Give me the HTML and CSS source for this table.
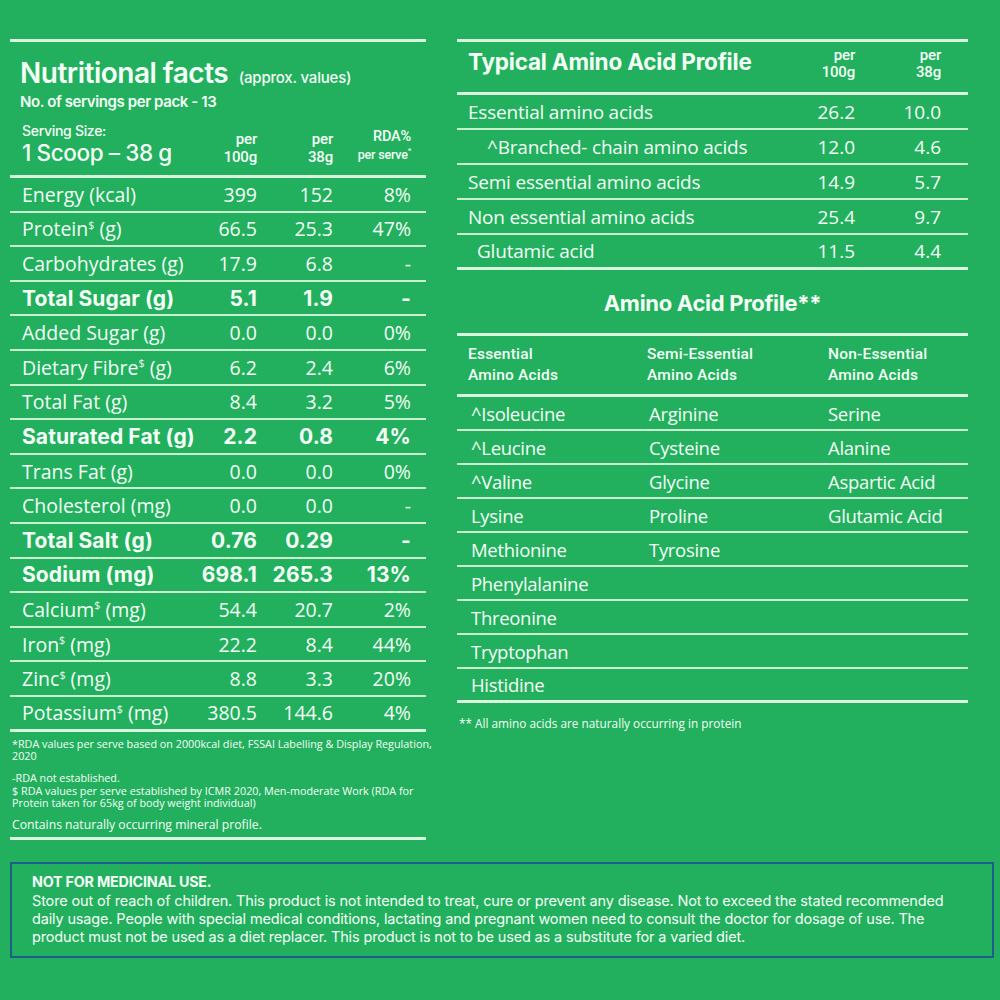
FILE: index.html
```html
<!DOCTYPE html>
<html>
<head>
<meta charset="utf-8">
<link rel="stylesheet" href="styles.css">
</head>
<body>
<div class="page">
  <div class="cols">
    <section class="left">
      <div class="nf-head">
        <div class="nf-title">Nutritional facts <span class="approx">(approx. values)</span></div>
        <div class="nf-serv">No. of servings per pack - 13</div>
      </div>
      <div class="nf-row nf-hdr">
        <div class="lab">
          <div class="ss">Serving Size:</div>
          <div class="scoop">1 Scoop – 38 g</div>
        </div>
        <div class="v c1 cond">per<br>100g</div>
        <div class="v c2 cond">per<br>38g</div>
        <div class="v c3 cond rda">RDA%<br><span class="ps">per serve<sup>*</sup></span></div>
      </div>
      <div class="nf-body">
        <div class="nf-row"><div class="lab">Energy (kcal)</div><div class="v c1">399</div><div class="v c2">152</div><div class="v c3">8%</div></div>
        <div class="nf-row"><div class="lab">Protein<sup>$</sup> (g)</div><div class="v c1">66.5</div><div class="v c2">25.3</div><div class="v c3">47%</div></div>
        <div class="nf-row"><div class="lab">Carbohydrates (g)</div><div class="v c1">17.9</div><div class="v c2">6.8</div><div class="v c3">-</div></div>
        <div class="nf-row b"><div class="lab">Total Sugar (g)</div><div class="v c1">5.1</div><div class="v c2">1.9</div><div class="v c3">-</div></div>
        <div class="nf-row"><div class="lab">Added Sugar (g)</div><div class="v c1">0.0</div><div class="v c2">0.0</div><div class="v c3">0%</div></div>
        <div class="nf-row"><div class="lab">Dietary Fibre<sup>$</sup> (g)</div><div class="v c1">6.2</div><div class="v c2">2.4</div><div class="v c3">6%</div></div>
        <div class="nf-row"><div class="lab">Total Fat (g)</div><div class="v c1">8.4</div><div class="v c2">3.2</div><div class="v c3">5%</div></div>
        <div class="nf-row b"><div class="lab">Saturated Fat (g)</div><div class="v c1">2.2</div><div class="v c2">0.8</div><div class="v c3">4%</div></div>
        <div class="nf-row"><div class="lab">Trans Fat (g)</div><div class="v c1">0.0</div><div class="v c2">0.0</div><div class="v c3">0%</div></div>
        <div class="nf-row"><div class="lab">Cholesterol (mg)</div><div class="v c1">0.0</div><div class="v c2">0.0</div><div class="v c3">-</div></div>
        <div class="nf-row b"><div class="lab">Total Salt (g)</div><div class="v c1">0.76</div><div class="v c2">0.29</div><div class="v c3">-</div></div>
        <div class="nf-row b"><div class="lab">Sodium (mg)</div><div class="v c1">698.1</div><div class="v c2">265.3</div><div class="v c3">13%</div></div>
        <div class="nf-row"><div class="lab">Calcium<sup>$</sup> (mg)</div><div class="v c1">54.4</div><div class="v c2">20.7</div><div class="v c3">2%</div></div>
        <div class="nf-row"><div class="lab">Iron<sup>$</sup> (mg)</div><div class="v c1">22.2</div><div class="v c2">8.4</div><div class="v c3">44%</div></div>
        <div class="nf-row"><div class="lab">Zinc<sup>$</sup> (mg)</div><div class="v c1">8.8</div><div class="v c2">3.3</div><div class="v c3">20%</div></div>
        <div class="nf-row last"><div class="lab">Potassium<sup>$</sup> (mg)</div><div class="v c1">380.5</div><div class="v c2">144.6</div><div class="v c3">4%</div></div>
      </div>
      <div class="notes">
        <p class="n1">*RDA values per serve based on 2000kcal diet, FSSAI Labelling &amp; Display Regulation, 2020</p>
        <p class="n2">-RDA not established.</p>
        <p class="n3">$ RDA values per serve established by ICMR 2020, Men-moderate Work (RDA for Protein taken for 65kg of body weight individual)</p>
        <p class="n4">Contains naturally occurring mineral profile.</p>
      </div>
    </section>

    <section class="right">
      <div class="aa">
        <div class="aa-row aa-hdr">
          <div class="lab aa-title">Typical Amino Acid Profile</div>
          <div class="v a1 cond">per<br>100g</div>
          <div class="v a2 cond">per<br>38g</div>
        </div>
        <div class="aa-row"><div class="lab">Essential amino acids</div><div class="v a1">26.2</div><div class="v a2">10.0</div></div>
        <div class="aa-row"><div class="lab ind2">^Branched- chain amino acids</div><div class="v a1">12.0</div><div class="v a2">4.6</div></div>
        <div class="aa-row"><div class="lab">Semi essential amino acids</div><div class="v a1">14.9</div><div class="v a2">5.7</div></div>
        <div class="aa-row"><div class="lab">Non essential amino acids</div><div class="v a1">25.4</div><div class="v a2">9.7</div></div>
        <div class="aa-row last"><div class="lab ind1">Glutamic acid</div><div class="v a1">11.5</div><div class="v a2">4.4</div></div>
      </div>

      <h2 class="ap-title">Amino Acid Profile**</h2>
      <div class="ap">
        <div class="ap-row ap-hdr cond"><div>Essential<br>Amino Acids</div><div>Semi-Essential<br>Amino Acids</div><div>Non-Essential<br>Amino Acids</div></div>
        <div class="ap-row"><div>^Isoleucine</div><div>Arginine</div><div>Serine</div></div>
        <div class="ap-row"><div>^Leucine</div><div>Cysteine</div><div>Alanine</div></div>
        <div class="ap-row"><div>^Valine</div><div>Glycine</div><div>Aspartic Acid</div></div>
        <div class="ap-row"><div>Lysine</div><div>Proline</div><div>Glutamic Acid</div></div>
        <div class="ap-row"><div>Methionine</div><div>Tyrosine</div><div></div></div>
        <div class="ap-row"><div>Phenylalanine</div><div></div><div></div></div>
        <div class="ap-row"><div>Threonine</div><div></div><div></div></div>
        <div class="ap-row"><div>Tryptophan</div><div></div><div></div></div>
        <div class="ap-row last"><div>Histidine</div><div></div><div></div></div>
      </div>
      <p class="ap-note">** All amino acids are naturally occurring in protein</p>
    </section>
  </div>

  <div class="warn">
    <div class="w-title">NOT FOR MEDICINAL USE.</div>
    <div class="w-body">Store out of reach of children. This product is not intended to treat, cure or prevent any disease. Not to exceed the stated recommended<br>daily usage. People with special medical conditions, lactating and pregnant women need to consult the doctor for dosage of use. The<br>product must not be used as a diet replacer. This product is not to be used as a substitute for a varied diet.</div>
  </div>
</div>
</body>
</html>
```

FILE: styles.css
```css
* { box-sizing: border-box; }
html, body { margin: 0; padding: 0; }
body {
  background: #22b05e;
  color: #f4fff6;
  font-family: "Open Sans", "DejaVu Sans", sans-serif;
  width: 1000px;
  height: 1000px;
  overflow: hidden;
}
.page { padding: 39px 0 0 10px; }
.cols { display: flex; gap: 31px; }
sup { font-size: 0.55em; vertical-align: 0; position: relative; top: -0.7em; }
.cond { font-family: Roboto, "Liberation Sans", sans-serif; font-weight: 500; letter-spacing: -0.2px; }

/* LEFT */
.left { width: 416px; border-top: 3px solid #d9f7dd; }
.nf-head { padding: 15px 0 0 10px; }
.nf-title { font-family: Inter, sans-serif; font-weight: 600; font-size: 28px; letter-spacing: -0.5px; line-height: 32px; }
.approx { font-size: 15px; font-weight: 500; letter-spacing: -0.2px; margin-left: 4px; }
.nf-serv { font-family: Inter, sans-serif; font-weight: 600; font-size: 15px; letter-spacing: -0.4px; line-height: 16px; }

.nf-row { display: flex; align-items: center; height: 34.6px; border-bottom: 2px solid #c9f0cf; font-size: 19.5px; }
.nf-row .lab { flex: 1; width: 0; padding-left: 12px; white-space: nowrap; letter-spacing: 0; }
.nf-row .v { text-align: right; flex: none; }
.nf-row .c1 { width: 120px; }
.nf-row .c2 { width: 76px; }
.nf-row .c3 { width: 78px; margin-right: 15px; }
.nf-row.b .lab, .nf-row.b .v { font-family: Inter, sans-serif; font-weight: 700; font-size: 21px; letter-spacing: 0.1px; }
.nf-row.last { border-bottom: 3px solid #d9f7dd; }

.nf-hdr { height: auto; align-items: flex-end; padding: 12px 0 0; border-bottom: 3px solid #d9f7dd; }
.nf-hdr .lab { padding-bottom: 9px; }
.nf-hdr .v { font-size: 15px; line-height: 18px; padding-bottom: 9px; }
.nf-hdr .rda { font-size: 14.5px; }
.ps { font-size: 12.5px; }
.ps sup { font-size: 8px; }
.ss { font-family: Inter, sans-serif; font-weight: 500; font-size: 14px; letter-spacing: -0.3px; line-height: 17px; }
.scoop { font-family: Inter, sans-serif; font-weight: 500; font-size: 22.5px; letter-spacing: -0.4px; line-height: 27px; }

.notes { padding: 6px 0 0 2px; border-bottom: 3px solid #d9f7dd; font-size: 10.8px; line-height: 12px; }
.notes p { margin: 0; }
.notes .n1 { margin-bottom: 10px; margin-right: -8px; }
.notes .n2 { margin-bottom: 1px; }
.notes .n3 { margin-bottom: 10px; padding-right: 10px; }
.notes .n4 { font-size: 12.2px; padding-bottom: 6px; }

/* RIGHT */
.right { width: 511px; }
.aa { border-top: 3px solid #d9f7dd; }
.aa-row { display: flex; align-items: center; height: 35px; border-bottom: 2px solid #c9f0cf; font-size: 19px; }
.aa-row .lab { flex: 1; padding-left: 11px; white-space: nowrap; letter-spacing: -0.2px; }
.aa-row .v { text-align: right; flex: none; }
.aa-row .a1 { width: 60px; }
.aa-row .a2 { width: 86px; margin-right: 27px; }
.aa-row.last { border-bottom: 3px solid #d9f7dd; }
.ind2 { padding-left: 30px !important; }
.ind1 { padding-left: 20px !important; }
.aa-hdr { height: 53px; align-items: flex-start; padding-top: 5px; border-bottom: 3px solid #d9f7dd; }
.aa-hdr .v { font-size: 15px; line-height: 17px; }
.aa-title { font-family: Inter, sans-serif; font-weight: 700; font-size: 22.5px; letter-spacing: -0.4px; line-height: 30px; }

.ap-title { margin: 0; text-align: center; font-family: Inter, sans-serif; font-weight: 700; font-size: 22px; letter-spacing: -0.3px; height: 63px; line-height: 66px; }
.ap { border-top: 3px solid #d9f7dd; }
.ap-row { display: grid; grid-template-columns: 178px 179px 1fr; padding-left: 14px; height: 34px; align-items: center; border-bottom: 2px solid #c9f0cf; font-size: 18.5px; letter-spacing: -0.3px; }
.ap-row.last { border-bottom: 3px solid #d9f7dd; }
.ap-hdr { height: 61px; padding-left: 11px; grid-template-columns: 179px 181px 1fr; font-size: 15.5px; line-height: 21px; border-bottom: 3px solid #d9f7dd; letter-spacing: 0.2px; }
.ap-note { margin: 12px 0 0 2px; font-size: 11.8px; }

/* WARNING */
.warn { margin: 22px 0 0 0; width: 984px; border: 2.5px solid #1b5e8c; padding: 8px 20px 10px; font-family: Inter, sans-serif; }
.w-title { font-weight: 700; font-size: 14.3px; letter-spacing: -0.2px; line-height: 20px; }
.w-body { font-size: 14.5px; letter-spacing: -0.15px; line-height: 18px; white-space: nowrap; }
```
